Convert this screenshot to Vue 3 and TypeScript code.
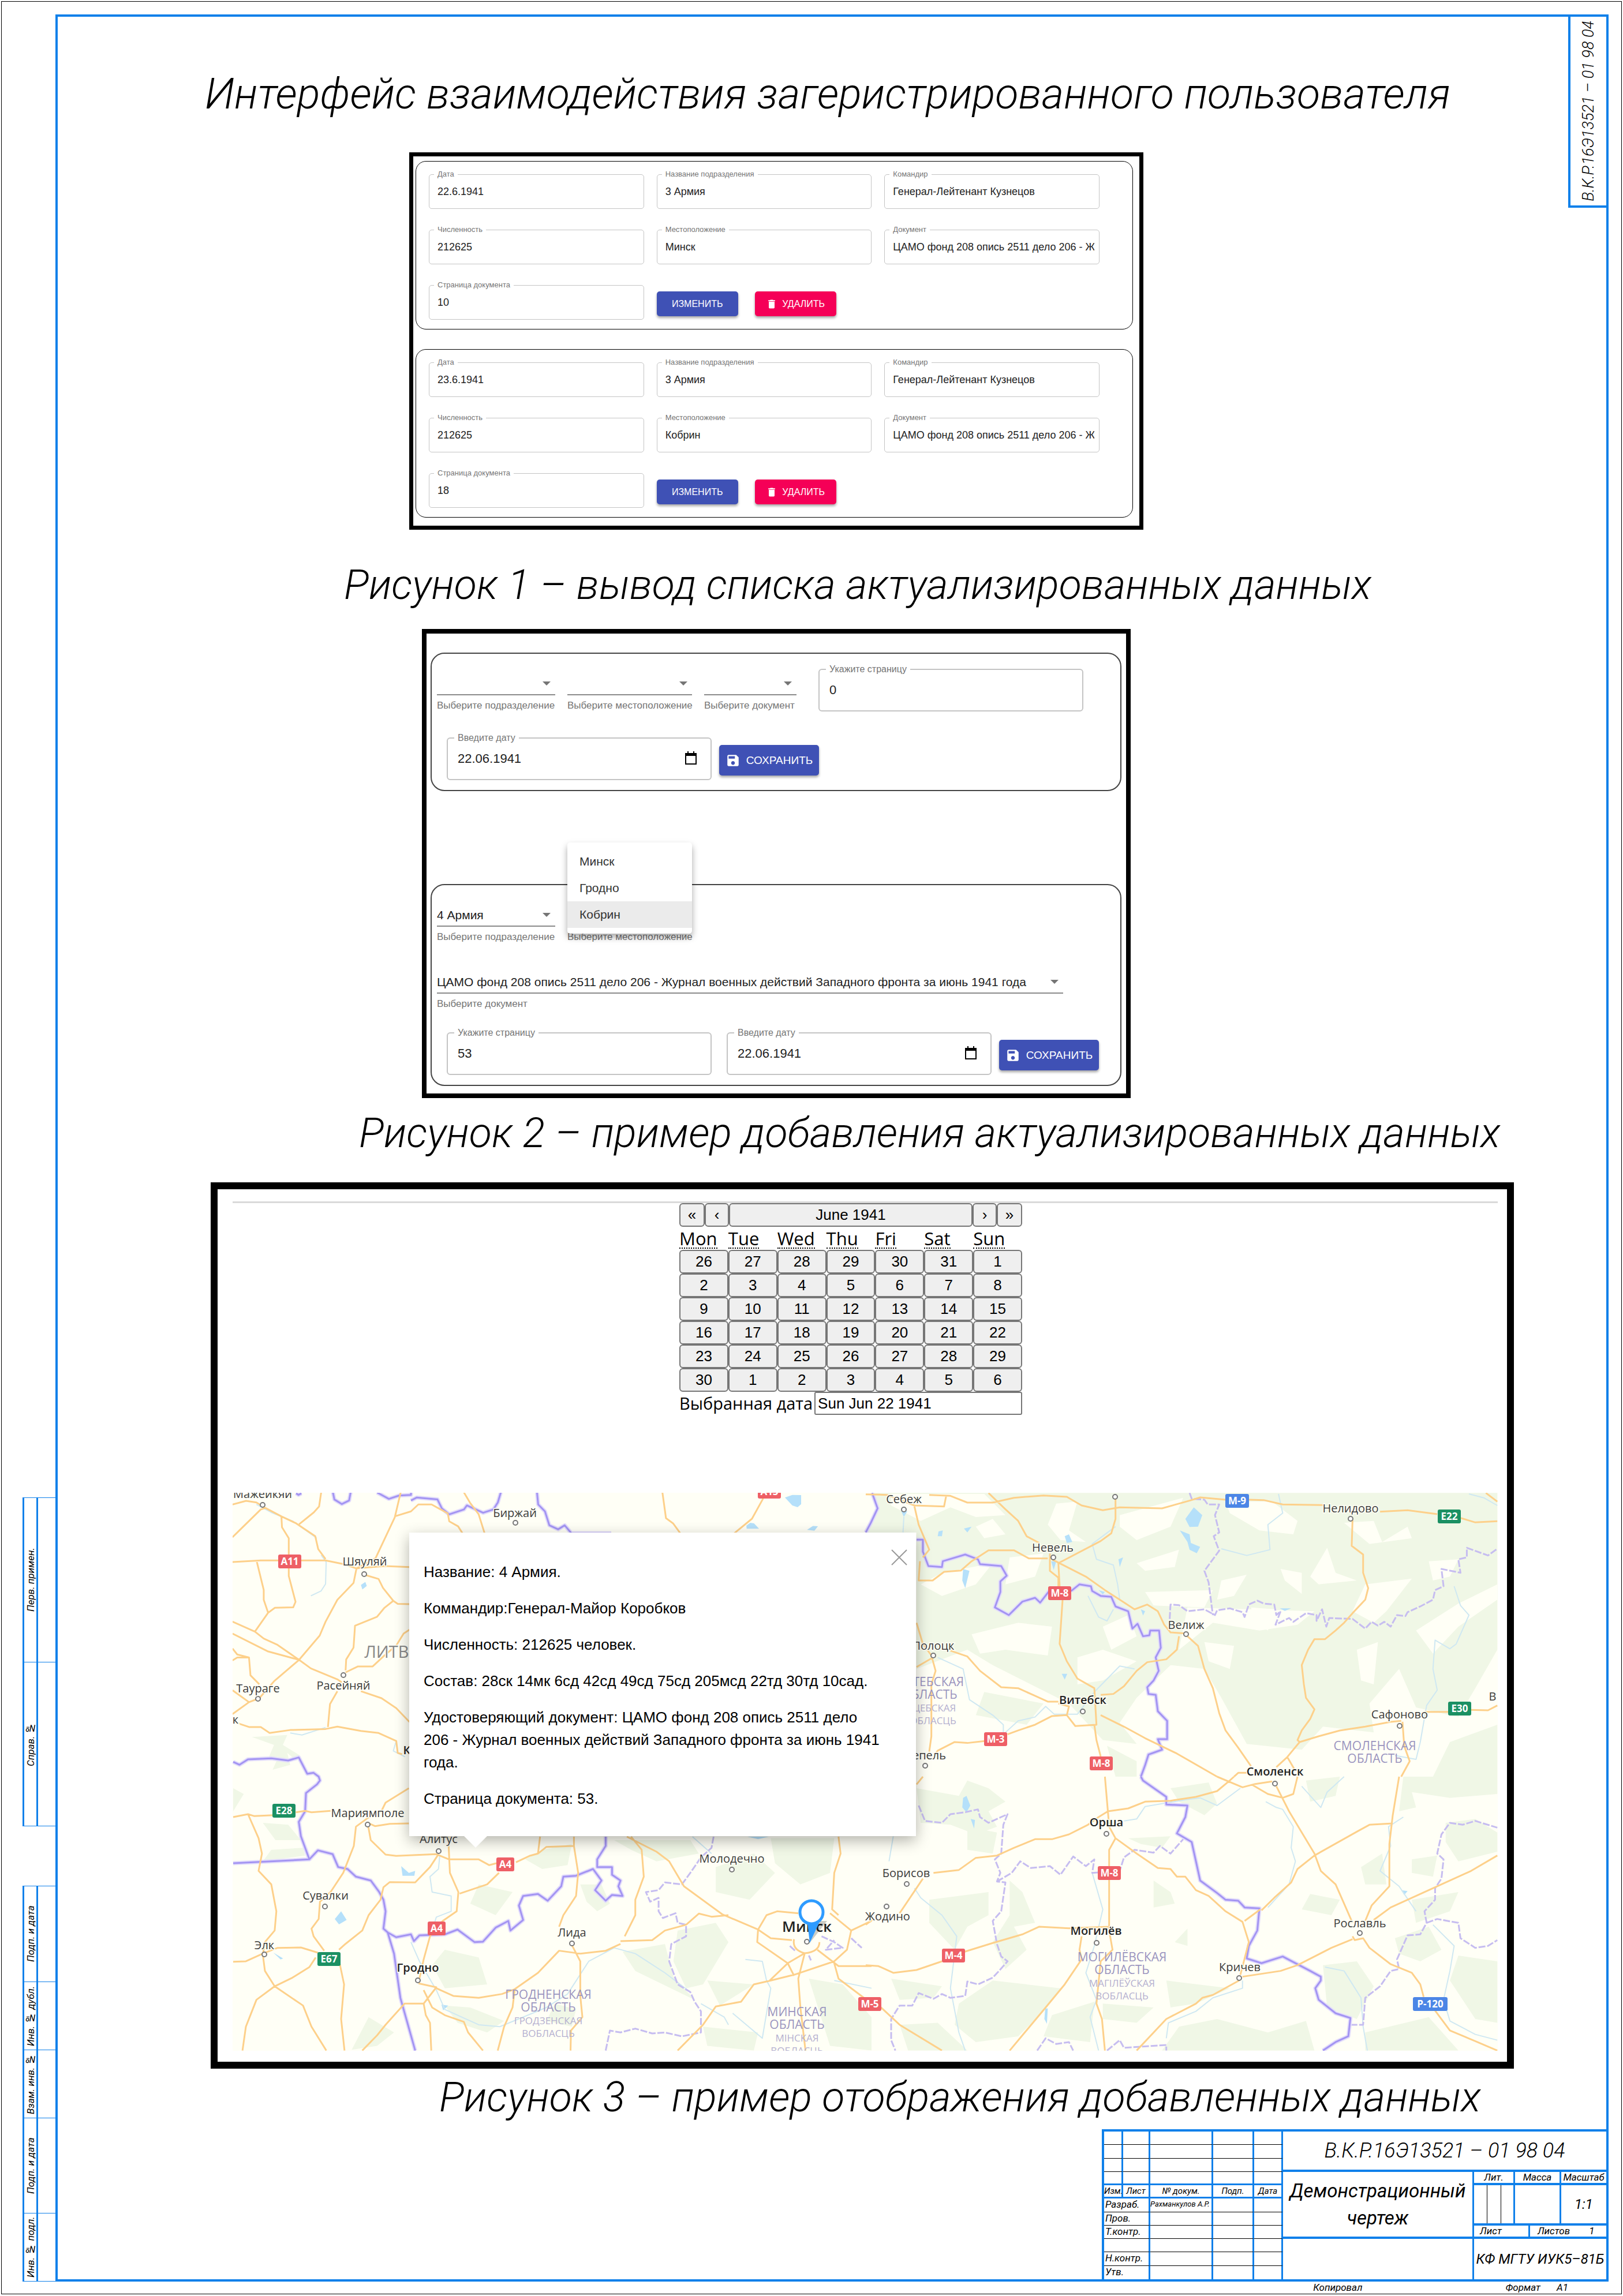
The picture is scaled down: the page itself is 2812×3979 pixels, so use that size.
<script setup lang="ts">
import { ref } from 'vue'

interface UnitRecord {
  id: number
  date: string
  unit: string
  commander: string
  strength: string
  place: string
  doc: string
  page: string
}

const docName = 'ЦАМО фонд 208 опись 2511 дело 206 - Журнал военных действий Западного фронта за июнь 1941 года'

const records = ref<UnitRecord[]>([
  { id: 1, date: '22.6.1941', unit: '3 Армия', commander: 'Генерал-Лейтенант Кузнецов', strength: '212625', place: 'Минск', doc: docName, page: '10' },
  { id: 2, date: '23.6.1941', unit: '3 Армия', commander: 'Генерал-Лейтенант Кузнецов', strength: '212625', place: 'Кобрин', doc: docName, page: '18' },
])

const recordFields: { key: Exclude<keyof UnitRecord, 'id'>; label: string }[] = [
  { key: 'date', label: 'Дата' },
  { key: 'unit', label: 'Название подразделения' },
  { key: 'commander', label: 'Командир' },
  { key: 'strength', label: 'Численность' },
  { key: 'place', label: 'Местоположение' },
  { key: 'doc', label: 'Документ' },
  { key: 'page', label: 'Страница документа' },
]

const newPage = ref('0')
const newDate = ref('22.06.1941')
const editPage = ref('53')
const editDate = ref('22.06.1941')
const places = ['Минск', 'Гродно', 'Кобрин']
const activePlace = ref('Кобрин')
const pickedDate = ref('Sun Jun 22 1941')

const weekdays = ['Mon', 'Tue', 'Wed', 'Thu', 'Fri', 'Sat', 'Sun']
const days: number[] = [
  ...[26, 27, 28, 29, 30, 31],
  ...Array.from({ length: 30 }, (_, i) => i + 1),
  ...[1, 2, 3, 4, 5, 6],
]

// Each map tile is traced on its own grid and placed by its transform.
interface Tile {
  transform: string
  forest?: string
  clearing?: string
  water?: string
  river?: string
  road: string
  border: string
  region?: string
}

const tiles: Tile[] = [
  {
    transform: 'translate(-43 -28) scale(.5102 .3444)',
    forest: 'M150 1310L270 1300L255 1350L310 1400L300 1430L270 1390L280 1450L220 1475L240 1410L205 1420L225 1350Z',
    water: 'M520 545L535 530L540 550L525 568ZM1960 105L1985 92L2015 93L2015 139L2003 154L1985 145ZM1829 247L1842 232L1855 235L1872 262L1830 262ZM2035 268L2055 248L2072 250L2060 272Z',
    river: 'M385 395L402 430L400 540L385 575L350 600M165 140L215 180L290 225L370 310M640 1330L630 1380L670 1410M280 1290L320 1300L400 1262',
    road: 'M84 305L118 255L180 165L196 158M84 140L130 122L165 130L196 158L250 200L300 235L365 300L375 365L400 415M250 200L252 255L275 310L275 500L298 630L290 658L228 660L205 685L190 620L190 570L166 425M84 430L180 422L400 422L460 440L505 462L600 450L685 455M385 80L378 150L360 180L310 240M655 80L635 205L570 410L505 462M635 200L690 175L715 140L760 140L815 185L820 225L850 250L865 285M870 80L890 130L920 190L940 285M505 462L495 535L440 620L400 730L380 800L310 922L225 1030L175 1115L140 1135L84 1195M535 495L580 515L595 560L630 625L645 640L685 642M630 625L600 660L575 705L500 750L495 860L470 920L468 975M84 730L160 780L205 685M160 780L190 815L235 845L310 922L350 965L440 1020L455 1035M84 790L205 880L310 922M84 865L100 895L140 910L145 1000L175 1045M84 925L100 910L140 910M468 985L510 955L560 955L600 900L640 850L665 790L685 770M440 1080L415 1145L408 1260M520 1080L590 1115L640 1165L685 1235M84 1075L140 1135M100 1240L140 1260L180 1260L210 1290L280 1275L400 1270L440 1258L520 1280L580 1290L640 1330L645 1390L660 1397M1544 81L1556 209L1580 235L1607 290M1886 110L1848 212L1788 285',
    border: 'M300 84L308 92L318 84M425 80L430 115L455 138L480 120L485 80M575 80L615 112L650 95L690 92L690 80M690 120L710 105L780 115L795 160L820 190L870 165L880 145L935 182L970 165L985 130L995 80M1118 80L1122 140L1145 175L1160 245L1190 265L1212 245L1235 285L1370 285',
  },
  {
    transform: 'translate(-43 492) scale(.7334 .3333)',
    forest: 'M60 60L85 90L60 180ZM150 380L225 370L230 410L130 440ZM130 240L190 250L220 330L160 330ZM790 380L860 350L850 460L790 480L750 430ZM960 330L1140 330L1160 400L1060 440L1000 380ZM880 560L930 560L950 660L920 700L895 650ZM1200 470L1290 400L1340 500L1280 640L1200 600ZM1330 320L1480 320L1470 500L1400 560L1340 450ZM640 560L720 600L680 720L620 660ZM1110 800L1200 760L1230 860L1170 1080L1130 1100L1100 960ZM980 910L1080 870L1100 1040L1150 1160L1010 1010ZM560 900L640 940L660 1080L560 1100L530 980ZM1180 1060L1290 1080L1210 1190ZM440 1330L380 1250L340 1420L400 1400ZM1170 1300L1300 1330L1290 1424L1180 1400ZM1420 1050L1500 1080L1568 1250L1568 1424L1470 1400ZM820 1180L870 1210L860 1300L800 1270ZM560 1190L620 1200L700 1270L660 1330L590 1280Z',
    water: 'M457 465L475 500L490 490L488 515L460 515ZM300 740L315 700L328 745L310 768ZM1275 312L1325 312L1300 325ZM155 915L178 945L172 950ZM552 1185L568 1190L556 1215Z',
    river: 'M548 410L545 480L525 520L530 600L575 620L575 700L540 730L530 800M480 860L500 960L540 1110L560 1210L640 1290L690 1300L800 1200L850 1130L900 960L960 890L1010 920L1080 1020L1140 1120M1165 1180L1220 1250L1230 1290M1270 950L1310 960L1320 1060L1330 1100L1310 1360L1240 1230M1145 312L1190 400M1480 1060L1568 1100',
    road: 'M60 210L95 195L110 205L155 200M95 195L120 320L128 400L120 490L150 560L162 700L158 800L135 860L130 925L135 1010L158 1090L225 1190L245 1300L280 1424M208 185L230 178L245 185L290 178M475 60L420 135L410 180L378 215L350 260L345 360L320 500L290 600L265 650L262 740L245 790L250 830L275 905M378 240L395 257L430 245L475 243M378 245L385 330L420 405L445 412L540 403L570 430L640 430L665 460L682 450M728 445L760 412L780 400L785 312M545 403L525 470L490 550L430 548L415 575L408 640L380 720L365 800L325 870L310 900M568 312L572 500L592 600L588 700L555 750L525 830L510 950L498 1070M595 608L660 560L688 500M780 400L800 365L865 360L865 312M865 360L875 500L870 620L840 720L830 780M60 962L90 960L130 920L165 890L220 888L260 915M82 1424L90 1300L115 1160L158 1090L200 1045L240 990L255 940M312 975L322 1080L315 1260L323 1424M498 1075L540 1095L510 1180L465 1180L420 1290L400 1345L365 1424M540 1100L580 1140L640 1150L695 1130M510 1110L530 1200L560 1240L605 1275L615 1330L650 1424M510 1180L515 1240L525 1280L528 1424M695 1130L725 1105L780 1020L830 905L880 920L940 905L975 870M860 875L880 960L880 1140L885 1250L858 1320L857 1424M725 1110L720 1200L700 1300L685 1424M975 855L1050 850L1080 800L1130 770L1160 712L1190 728L1230 720M990 312L1060 390L1090 440L1125 570L1215 715L1300 795L1330 840L1380 850M1000 312L1025 380L1030 520L1010 640L1010 720L985 830M1300 795L1320 720L1345 700L1395 710M1300 795L1298 860L1370 970L1385 1035M1490 312L1495 400L1480 500L1475 690L1490 720M1470 710L1520 800L1510 900L1480 960L1385 1030L1330 1060L1290 1080L1260 1170L1200 1195L1170 1290L1110 1424M1520 800L1568 750M1410 920L1395 1050L1400 1200L1412 1424M1440 900L1490 985L1568 985M1480 970L1490 1050L1550 1150M1385 845Q1380 900 1410 918Q1445 910 1445 860M1410 918L1370 970L1325 1065',
    border: 'M60 -77L75 -62L95 -90L150 -95L190 -84L215 -100L235 -15L250 -20L262 0L265 20L258 40L232 85L230 180L215 235L220 310L240 430L60 450M240 430L260 383L295 403L308 470L330 480L350 520L385 540L405 600L415 640L420 700L415 790L425 810L440 920L455 1150L490 1424M425 810L445 835L480 820L487 855L500 825L560 820L590 795L630 860L650 858L680 785L710 750L715 800L745 745L735 670L745 620L780 610L803 645L835 570L840 520L870 515L910 480L930 540L915 590L940 645L955 615L980 620L970 570L975 540L955 510L955 470L920 470L920 430L940 360L940 312',
    region: 'M1195 312L1190 370L1165 420L1140 500L1120 560L1080 550L1065 590L1035 600L1045 650L1065 630L1065 700L1075 735L1105 710L1110 760L1130 770L1130 830L1095 870L1090 960L1110 1080L1140 1120L1150 1170L1165 1220L1165 1330L1120 1350L1080 1330L1050 1335L1010 1310L975 1330L950 1320L940 1424M1450 830L1480 860L1500 890L1460 900L1480 850M1375 880L1390 910M1420 930L1425 955M1520 840L1545 890',
  },
  {
    transform: 'translate(1097 -28) scale(.7334 .3333)',
    forest: 'M15 85L1492 85L1492 900L1440 1100L1400 1250L1300 1200L1260 1000L1190 1180L1200 1330L1080 1300L1030 1420L900 1390L840 1150L800 1000L720 980L640 1150L600 1280L640 1390L560 1370L480 1180L300 980L240 900L120 1000L120 290L0 290L12 240L28 165ZM280 1120L420 1180L380 1290L260 1240ZM1380 1380L1492 1290L1492 1560L1340 1560ZM570 1400L640 1480L640 1560L590 1560Z',
    clearing: 'M60 90L280 90L330 200L260 210L200 160L130 230L60 150ZM450 140L500 130L480 280L520 340L460 330L430 250ZM600 200L750 110L720 260L640 330L600 260ZM850 130L960 130L1020 230L1010 300L930 280L860 190ZM260 260L300 220L330 300L280 320ZM1130 240L1200 230L1220 340L1280 260L1290 320L1190 350ZM130 560L180 500L300 450L260 560L180 620ZM340 420L420 400L400 520L330 560ZM640 450L740 380L730 470L660 490ZM980 480L1030 500L1030 610L990 540ZM1050 520L1090 370L1110 500L1160 540L1070 560ZM840 540L900 510L870 620L830 640ZM660 600L820 590L800 680L680 670ZM1180 560L1290 530L1230 700L1200 760L1150 700ZM250 820L360 760L440 780L430 930L330 900L270 920ZM560 780L620 720L640 830L580 900ZM760 680L1060 700L1020 770L930 800L820 760L740 900ZM1300 800L1400 660L1492 560L1492 640L1400 780L1340 920ZM1160 900L1210 860L1200 1080L1170 1060ZM910 680L970 690L950 800L920 760ZM500 940L560 900L640 960L560 1060L500 1080ZM1330 440L1400 430L1380 520L1340 540ZM800 860L870 880L860 1000L810 960Z',
    water: 'M755 220L775 160L795 200L785 260L765 262ZM742 280L765 300L768 345L790 365L782 398L765 380L760 340ZM470 310L480 300L488 340L475 345ZM232 270L250 260L240 290ZM172 285L182 280L180 310L170 310ZM230 480L245 490L235 580L228 540ZM597 430L608 420L600 470ZM438 440L450 440L444 485ZM84 180L98 180L90 210ZM978 685L1005 685L990 698ZM650 690L660 700L655 722ZM463 1025L476 1025L470 1055ZM550 590L565 600L560 612Z',
    river: 'M90 210L88 290M590 260L535 350L545 430L585 460L595 560L600 640M975 90L985 190L950 250L955 380L900 410L840 375M525 620L550 730L570 750L585 690M170 940L230 1000L245 1160L300 1240L325 1290L325 1340M325 1340L360 1270L400 1250L425 1195L445 1235L500 1235L540 1120L600 985L635 1000M1390 570L1405 670L1425 720L1395 870L1380 895L1345 850L1340 1000L1350 1110L1325 1190L1310 1380L1300 1470L1250 1450M1425 90L1460 110L1492 150',
    road: 'M150 95L200 100L240 135L300 135L350 110L420 98L475 105L510 150L560 175L600 160L700 165L765 125L790 108L850 120M0 92L50 95L115 150L185 155L190 100M905 120L940 122L985 145L1080 148M1215 182L1280 175L1350 195M1405 215L1440 238L1492 232M290 85L330 170L360 230L380 310L410 345M590 100L590 220L580 295L555 335L455 450M115 155L125 250L150 380L135 420M128 440L125 540L158 540L185 495L225 488L250 440L290 383L350 383L385 425L430 425M435 400L435 490L455 525L455 570M440 430L520 520L565 590L600 640L635 690L665 665L690 700L705 770L720 810L755 815M455 450L458 570M465 641L458 870L475 960L500 1050L540 1100L545 1290L495 1297L475 1240L480 1195L455 1180M760 830L785 880L800 1000L820 1100L835 1230L850 1320L880 1410L910 1505M740 830L735 900L710 950L665 965L640 1010L610 1090L585 1130L555 1135M120 760L135 870L155 930L165 1010L155 1080L155 1350L150 1430M120 990L155 945M200 905L240 935L270 1010L320 1095L360 1100L400 1140L430 1170L455 1170M335 1340L360 1320L400 1290L440 1245L475 1240M281 1375L240 1385L210 1380L170 1425L165 1440M555 1240L610 1300L660 1360L735 1440L830 1560M540 1290L545 1370L555 1455M1150 225L1148 360L1175 405L1175 500L1187 580L1180 640L1150 710L1130 760L1110 800L1085 845L1060 845L1045 900L1030 980L1035 1080L1040 1150L1060 1210L1050 1260L1030 1320L1020 1370L1025 1380L995 1460L970 1510M1025 1380L1070 1350L1120 1320L1180 1300L1240 1275L1265 1270M1320 1223L1377 1223M1429 1213L1470 1215L1492 1190M1268 1275L1272 1400L1285 1480L1265 1560M995 1455L1015 1530M1465 85L1492 130M870 1560L880 1540L905 1540',
    border: 'M15 85L28 165L12 240L0 290M120 328L135 328L135 390L148 465L180 470L182 440L235 405L265 430L270 455L320 465L333 515L318 545L318 600L305 680L338 720L370 650L400 630L412 655L435 590M485 595L505 560L532 570L535 595L555 620L580 625L590 675L620 700L630 790L642 765L655 830L670 825L672 800L693 800L697 890L685 940L692 1010L680 1060L665 1095L668 1130L685 1135L690 1220L712 1270L712 1365L690 1365L700 1420L668 1445L660 1500L650 1560',
    region: 'M765 85L770 115L800 120L808 145L835 145L825 200L835 290L822 310L835 385L800 490L810 550L820 720M718 740L720 665L740 668L760 700L800 690L825 720L830 695L860 685L890 705L895 730L905 665L925 645L940 660L965 665L970 720L980 700L968 770L1000 735L1010 755L1040 710L1065 720L1065 750L1078 690L1088 780L1095 735L1150 740L1180 790L1195 755L1210 775L1225 755L1240 780L1255 720L1275 725L1280 705L1310 675L1340 640L1345 590L1365 570L1360 480L1405 500L1400 430L1420 420L1420 370L1470 410L1492 375',
  },
  {
    transform: 'translate(1097 492) scale(.7334 .3333)',
    forest: 'M120 60L220 100L240 20L290 60L330 130L290 180L310 260L260 300L200 250L130 240ZM240 260L310 290L300 400L240 380ZM340 540L370 600L400 760L350 780L380 900L330 1000L300 860L340 720ZM150 640L290 600L290 720L240 780L210 900L150 760ZM680 540L720 600L730 660L680 680ZM620 320L720 310L700 370L650 350ZM720 60L810 30L830 140L800 200L740 130ZM1040 20L1120 0L1110 100L1050 130ZM1270 0L1492 0L1492 90L1380 110L1290 80L1300 160L1260 180ZM1370 240L1440 220L1492 290L1492 390L1400 440L1370 340ZM1050 610L1120 640L1100 720L1030 690ZM1170 470L1220 400L1230 560L1180 560ZM1290 430L1350 410L1340 520L1290 500ZM1290 640L1400 600L1380 700L1300 760ZM1250 840L1330 780L1360 900L1310 960L1260 920ZM1400 930L1492 960L1492 1280L1440 1260L1380 1060ZM710 1060L860 1100L780 1180L720 1200ZM740 1300L830 1260L950 1330L1040 1270L1060 1424L700 1424ZM1080 980L1160 960L1200 1090L1160 1260L1090 1200ZM60 1050L180 1090L160 1150L80 1160ZM220 1180L300 1060L460 1100L420 1220L360 1350L260 1380L210 1290ZM440 1240L540 1170L530 1380L420 1350ZM80 1290L170 1280L240 1424L100 1424ZM560 1180L680 1200L640 1280L560 1260ZM1180 1330L1330 1250L1400 1424L1180 1424ZM730 860L760 790L760 880Z',
    water: 'M230 110L238 100L247 150L238 185L228 160ZM248 220L258 225L256 270ZM1265 590L1280 595L1272 615ZM424 1205L430 1205L428 1285L422 1260Z',
    river: 'M65 310L55 440M115 580L130 630L180 720L215 830L200 1100L220 1330L235 1424M885 60L830 150L790 110L755 120L660 155L640 220L610 230M945 130L970 160L985 170L1010 260L1005 370L1015 440L1000 560L950 680M1030 50L1075 160L1090 80L1130 0M1270 210L1235 260L1240 360L1215 490L1260 570L1300 700M1340 770L1390 880L1380 1010L1365 1160L1380 1270L1440 1340L1492 1370M535 500L560 690L540 880L520 1020L545 1160L530 1250L550 1424M890 1060L890 1100L820 1150L780 1220L715 1280L710 1360M1085 990L1130 1010L1170 1150L1175 1300L1185 1424',
    road: 'M565 0L572 180L550 210L525 250L480 300L440 325L400 325L350 370L310 410L260 422L220 485L160 500M572 180L620 165L660 130L720 125L780 105L830 75L860 20L870 0M830 0L890 55L920 38L960 25M915 45L950 90L985 110L1010 90L1020 0M970 50L1000 180L1060 400L1075 490L1110 560L1150 760M572 180L575 260L590 320L640 400L690 475L720 480L735 520L755 520L780 590L810 620L850 700L890 755L905 860L885 1030M590 320L575 380L575 800L583 900L555 960L545 1180L558 1260L565 1424M932 690L895 750M935 695L965 630L1005 550L1020 480L1060 410L1165 280L1190 250L1245 243M1260 0L1245 200L1237 350L1237 570L1195 670L1180 750M1492 410L1430 490L1330 590L1240 680L1200 745M1150 830L1155 850L1175 840L1190 890L1240 975L1290 1020L1310 1080L1318 1145M1345 1216L1380 1320L1440 1375L1492 1424M1150 845L1100 890L1020 980L980 1010L890 1040M882 1060L820 1135L795 1150L780 1180L710 1260L640 1424M0 770L15 745M135 530L80 710M0 980L30 985L65 1020L120 1005L180 960M234 910L300 865L370 820L410 780L480 788L575 780M510 830L505 900L510 950L470 1080L425 1200L340 1424M36 1200L80 1290L180 1424M120 40L135 0',
    border: 'M650 0L655 20L710 105L710 145L760 150L755 210L735 295L770 340L780 440L790 540L830 605L850 640L880 645L895 680L930 685L925 800L905 880L900 945L935 970L985 935L1050 1010L1075 1040L1075 1060L1062 1100L1070 1160L1110 1230L1145 1255L1140 1350L1110 1380L1080 1424',
    region: 'M125 150L140 230L180 240L200 195L235 185L265 170L270 210L290 240L335 195L325 250L320 400L305 430L318 500L310 545L330 550L320 700L300 750L310 870L320 935L335 960L315 1010L300 1045L265 1080L240 1065L235 1140L200 1150L180 1130L160 1155L125 1125L110 1190L80 1190L60 1260L60 1370L70 1424M310 545L345 500L365 440L390 475L435 465L460 510L490 415L520 465L540 430L535 500L600 490L610 420L635 380L680 395L695 360L720 400L750 325M405 1424L425 1360L450 1390L480 1380L490 1424M570 1424L600 1370L610 1410L710 1395L710 1424M1145 1290L1175 1290L1180 1150L1215 1090L1240 1010L1260 1000L1255 950L1280 825L1310 820L1325 760L1320 700L1345 640L1345 580L1360 530L1365 430L1350 400L1360 300L1380 240L1410 250L1440 230L1492 265M1325 760L1350 740L1400 760L1405 840L1440 890L1470 880L1492 850',
  },
]

interface Town { name: string; x: number; y: number; dot?: [number, number]; kind?: string }
const towns: Town[] = [
  { name: 'Мажейкяй', x: 52, y: 9, dot: [52, 21] },
  { name: 'Биржай', x: 489, y: 42, dot: [490, 52] },
  { name: 'Шяуляй', x: 229, y: 126, dot: [228, 141] },
  { name: 'Таураге', x: 44, y: 346, dot: [44, 357] },
  { name: 'Расейняй', x: 192, y: 341, dot: [192, 316] },
  { name: 'к', x: 5, y: 400 },
  { name: 'Мариямполе', x: 234, y: 562, dot: [234, 575] },
  { name: 'Алитус', x: 357, y: 607, dot: [357, 621] },
  { name: 'Молодечно', x: 865, y: 641, dot: [865, 653] },
  { name: 'Сувалки', x: 161, y: 705, dot: [160, 717] },
  { name: 'Лида', x: 588, y: 769, dot: [588, 781] },
  { name: 'Элк', x: 55, y: 791, dot: [55, 800] },
  { name: 'Гродно', x: 321, y: 830, dot: [321, 845], kind: 'major' },
  { name: 'Минск', x: 995, y: 761, dot: [995, 778], kind: 'capital' },
  { name: 'Жодино', x: 1135, y: 741, dot: [1133, 717] },
  { name: 'Борисов', x: 1167, y: 666, dot: [1168, 678] },
  { name: 'Себеж', x: 1163, y: 18, dot: [1163, 29] },
  { name: 'Нелидово', x: 1937, y: 34, dot: [1937, 45] },
  { name: 'Невель', x: 1421, y: 102, dot: [1422, 112] },
  { name: 'Велиж', x: 1652, y: 236, dot: [1652, 245] },
  { name: 'Полоцк', x: 1214, y: 272, dot: [1214, 282] },
  { name: 'Витебск', x: 1473, y: 366, dot: [1473, 379], kind: 'major' },
  { name: 'Сафоново', x: 2022, y: 391, dot: [2022, 404] },
  { name: 'В', x: 2183, y: 360 },
  { name: 'Лепель', x: 1200, y: 462, dot: [1200, 473] },
  { name: 'Смоленск', x: 1806, y: 490, dot: [1806, 504], kind: 'major' },
  { name: 'Орша', x: 1514, y: 578, dot: [1514, 591], kind: 'major' },
  { name: 'Могилёв', x: 1496, y: 766, dot: [1497, 780], kind: 'major' },
  { name: 'Рославль', x: 1953, y: 753, dot: [1953, 763] },
  { name: 'Кричев', x: 1745, y: 829, dot: [1744, 841] },
  { name: 'К', x: 302, y: 453, kind: 'major' },
  { name: 'ЛИТВ', x: 267, y: 286, kind: 'country' },
]

const regions: { x: number; y: number; lines: string[] }[] = [
  { x: 547, y: 877, lines: ['ГРОДНЕНСКАЯ', 'ОБЛАСТЬ', 'ГРОДЗЕНСКАЯ', 'ВОБЛАСЦЬ'] },
  { x: 978, y: 907, lines: ['МИНСКАЯ', 'ОБЛАСТЬ', 'МІНСКАЯ', 'ВОБЛАСЦЬ'] },
  { x: 1208, y: 335, lines: ['ВИТЕБСКАЯ', 'ОБЛАСТЬ', 'ВІЦЕБСКАЯ', 'ВОБЛАСЦЬ'] },
  { x: 1979, y: 446, lines: ['СМОЛЕНСКАЯ', 'ОБЛАСТЬ'] },
  { x: 1541, y: 812, lines: ['МОГИЛЁВСКАЯ', 'ОБЛАСТЬ', 'МАГІЛЁЎСКАЯ', 'ВОБЛАСЦЬ'] },
]

const shields: { code: string; x: number; y: number; w: number; tone: string }[] = [
  { code: 'A11', x: 79, y: 107, w: 40, tone: 'red' },
  { code: 'A13', x: 910, y: -14, w: 40, tone: 'red' },
  { code: 'E28', x: 69, y: 539, w: 40, tone: 'green' },
  { code: 'A4', x: 457, y: 632, w: 31, tone: 'red' },
  { code: 'A4', x: 338, y: 743, w: 31, tone: 'red' },
  { code: 'E67', x: 147, y: 796, w: 40, tone: 'green' },
  { code: 'М-9', x: 1720, y: 2, w: 41, tone: 'blue' },
  { code: 'E22', x: 2088, y: 29, w: 40, tone: 'green' },
  { code: 'М-8', x: 1413, y: 162, w: 40, tone: 'red' },
  { code: 'E30', x: 2106, y: 362, w: 40, tone: 'green' },
  { code: 'М-3', x: 1302, y: 415, w: 40, tone: 'red' },
  { code: 'М-8', x: 1485, y: 457, w: 40, tone: 'red' },
  { code: 'М-8', x: 1499, y: 647, w: 40, tone: 'red' },
  { code: 'М-4', x: 1229, y: 790, w: 40, tone: 'red' },
  { code: 'М-5', x: 1084, y: 874, w: 40, tone: 'red' },
  { code: 'Р-120', x: 2045, y: 874, w: 60, tone: 'blue' },
]

const code = 'В.К.Р.16Э13521 – 01 98 04'
const blank = ['', '', '', '', '']
const approvals: string[][] = [
  ['Разраб.', 'Рахманкулов А.Р.'],
  ['Пров.', ''],
  ['Т.контр.', ''],
  ['', ''],
  ['Н.контр.', ''],
  ['Утв.', ''],
]
</script>

<template>
  <div class="sheet">
    <div class="sheet-main">
      <aside class="rail">
        <div class="rail-table">
          <div class="rail-row tall"><span>Перв. примен.</span></div>
          <div class="rail-row tall"><span>Справ. №</span></div>
        </div>
        <div class="rail-table">
          <div class="rail-row mid"><span>Подп. и дата</span></div>
          <div class="rail-row low"><span>Инв. № дубл.</span></div>
          <div class="rail-row low"><span>Взам. инв. №</span></div>
          <div class="rail-row mid"><span>Подп. и дата</span></div>
          <div class="rail-row low"><span>Инв. № подл.</span></div>
        </div>
      </aside>

      <main class="frame">
        <div class="content">
          <div class="figures">
            <h1 class="caption c0">Интерфейс взаимодействия загеристрированного пользователя</h1>

            <section class="figure list">
              <form v-for="r in records" :key="r.id" class="record" @submit.prevent>
                <label v-for="f in recordFields" :key="f.key" class="field small">
                  <span class="field-label">{{ f.label }}</span>
                  <input v-model="r[f.key]" type="text" />
                </label>
                <div class="actions">
                  <button type="button" class="btn primary">ИЗМЕНИТЬ</button>
                  <button type="button" class="btn danger">
                    <svg viewBox="0 0 24 24" width="20" height="20" aria-hidden="true"><path d="M6 19c0 1.100.9 2 2 2h8c1.100 0 2-.9 2-2V7H6v12zM19 4h-3.500l-1-1h-5l-1 1H5v2h14V4z" fill="currentColor" /></svg>
                    УДАЛИТЬ
                  </button>
                </div>
              </form>
            </section>

            <h2 class="caption c1">Рисунок 1 – вывод списка актуализированных данных</h2>

            <section class="figure add">
              <form class="card" @submit.prevent>
                <div class="row">
                  <label class="pick w-unit">
                    <span class="pick-box"><select><option></option></select><i class="arrow"></i></span>
                    <span class="helper">Выберите подразделение</span>
                  </label>
                  <label class="pick w-place">
                    <span class="pick-box"><select><option></option></select><i class="arrow"></i></span>
                    <span class="helper">Выберите местоположение</span>
                  </label>
                  <label class="pick w-doc">
                    <span class="pick-box"><select><option></option></select><i class="arrow"></i></span>
                    <span class="helper">Выберите документ</span>
                  </label>
                  <label class="field large first-page">
                    <span class="field-label">Укажите страницу</span>
                    <input v-model="newPage" type="text" />
                  </label>
                </div>
                <div class="row inset">
                  <label class="field large">
                    <span class="field-label">Введите дату</span>
                    <input v-model="newDate" type="text" />
                    <svg class="cal" viewBox="0 0 22 24" aria-hidden="true"><path d="M2 4h18v18H2zM2 5h18M6 0v4M16 0v4" fill="none" stroke="#000" stroke-width="2" /><path d="M2 3h18v5H2z" /></svg>
                  </label>
                  <button type="submit" class="btn primary save">
                    <svg viewBox="0 0 24 24" width="26" height="26" aria-hidden="true"><path d="M17 3H5c-1.110 0-2 .9-2 2v14c0 1.100.89 2 2 2h14c1.100 0 2-.9 2-2V7l-4-4zm-5 16c-1.660 0-3-1.340-3-3s1.340-3 3-3 3 1.340 3 3-1.340 3-3 3zm3-10H5V5h10v4z" fill="currentColor" /></svg>
                    СОХРАНИТЬ
                  </button>
                </div>
              </form>

              <form class="card second" @submit.prevent>
                <div class="row">
                  <label class="pick w-unit">
                    <span class="pick-box"><select><option>4 Армия</option></select><i class="arrow"></i></span>
                    <span class="helper">Выберите подразделение</span>
                  </label>
                  <div class="pick w-place">
                    <label>
                      <span class="pick-box"><select v-model="activePlace"><option v-for="p in places" :key="p">{{ p }}</option></select></span>
                      <span class="helper">Выберите местоположение</span>
                    </label>
                    <ul class="menu" role="listbox">
                      <li v-for="p in places" :key="p" role="option" :aria-selected="p === activePlace" :class="{ active: p === activePlace }" @click="activePlace = p">{{ p }}</li>
                    </ul>
                  </div>
                </div>
                <label class="pick w-long">
                  <span class="pick-box"><select><option>{{ docName }}</option></select><i class="arrow"></i></span>
                  <span class="helper">Выберите документ</span>
                </label>
                <div class="row inset wide">
                  <label class="field large">
                    <span class="field-label">Укажите страницу</span>
                    <input v-model="editPage" type="text" />
                  </label>
                  <label class="field large">
                    <span class="field-label">Введите дату</span>
                    <input v-model="editDate" type="text" />
                    <svg class="cal" viewBox="0 0 22 24" aria-hidden="true"><path d="M2 4h18v18H2zM2 5h18M6 0v4M16 0v4" fill="none" stroke="#000" stroke-width="2" /><path d="M2 3h18v5H2z" /></svg>
                  </label>
                  <button type="submit" class="btn primary save">
                    <svg viewBox="0 0 24 24" width="26" height="26" aria-hidden="true"><path d="M17 3H5c-1.110 0-2 .9-2 2v14c0 1.100.89 2 2 2h14c1.100 0 2-.9 2-2V7l-4-4zm-5 16c-1.660 0-3-1.340-3-3s1.340-3 3-3 3 1.340 3 3-1.340 3-3 3zm3-10H5V5h10v4z" fill="currentColor" /></svg>
                    СОХРАНИТЬ
                  </button>
                </div>
              </form>
            </section>

            <h2 class="caption c2">Рисунок 2 – пример добавления актуализированных данных</h2>

            <section class="figure show">
              <hr class="rule" />
              <div class="calendar">
                <div class="cal-nav">
                  <button type="button">«</button>
                  <button type="button">‹</button>
                  <button type="button" class="month">June 1941</button>
                  <button type="button">›</button>
                  <button type="button">»</button>
                </div>
                <div class="cal-grid">
                  <div v-for="w in weekdays" :key="w" class="weekday"><abbr>{{ w }}</abbr></div>
                  <button v-for="(d, i) in days" :key="i" type="button">{{ d }}</button>
                </div>
                <label class="picked">Выбранная дата<input v-model="pickedDate" type="text" /></label>
              </div>

              <div class="map">
                <svg class="map-art" viewBox="0 0 2192 967">
                  <rect width="2192" height="967" fill="#fffff6" />
                  <g v-for="t in tiles" :key="'f' + t.transform" :transform="t.transform">
                    <path v-if="t.forest" :d="t.forest" class="forest" />
                    <path v-if="t.clearing" :d="t.clearing" class="clearing" />
                    <path v-if="t.water" :d="t.water" class="water" />
                    <path v-if="t.river" :d="t.river" class="river" />
                  </g>
                  <g v-for="t in tiles" :key="'r' + t.transform" :transform="t.transform">
                    <path v-if="t.region" :d="t.region" class="region" />
                    <path :d="t.border" class="border-glow" />
                    <path :d="t.border" class="border" />
                    <path :d="t.road" class="road" />
                  </g>
                  <g v-for="t in towns" :key="t.name" class="town" :class="t.kind">
                    <circle v-if="t.dot" :cx="t.dot[0]" :cy="t.dot[1]" r="4" />
                    <text :x="t.x" :y="t.y">{{ t.name }}</text>
                  </g>
                  <circle class="lone" cx="1529" cy="7" r="4" />
                  <g v-for="r in regions" :key="r.lines[0]" class="oblast">
                    <text v-for="(l, i) in r.lines" :key="i" :x="r.x" :y="r.y + i * 22" :class="{ minor: i > 1 }">{{ l }}</text>
                  </g>
                  <g v-for="(s, i) in shields" :key="i" :class="['shield', s.tone]">
                    <rect :x="s.x" :y="s.y" :width="s.w" height="24" rx="3" />
                    <text :x="s.x + s.w / 2" :y="s.y + 18">{{ s.code }}</text>
                  </g>
                  <g>
                    <path d="M1000 780L1030 742L1018 742Z" fill="#000" opacity=".2" />
                    <path d="M996 746L1000 780L1016 746Z" fill="#2e9bff" />
                    <circle cx="1003" cy="727" r="20" fill="#fff" stroke="#2e9bff" stroke-width="5" />
                  </g>
                </svg>
                <article class="balloon">
                  <button type="button" class="close" aria-label="Закрыть">
                    <svg viewBox="0 0 28 28" width="28" height="28"><path d="M1 1L27 27M27 1L1 27" stroke="#999" stroke-width="2" /></svg>
                  </button>
                  <p>Название: 4 Армия.</p>
                  <p>Коммандир:Генерал-Майор Коробков</p>
                  <p>Численность: 212625 человек.</p>
                  <p>Состав: 28ск 14мк 6сд 42сд 49сд 75сд 205мсд 22тд 30тд 10сад.</p>
                  <p>Удостоверяющий документ: {{ docName }}.</p>
                  <p>Страница документа: 53.</p>
                </article>
              </div>
            </section>

            <h2 class="caption c3">Рисунок 3 – пример отображения добавленных данных</h2>
          </div>

          <div class="stamp"><span>{{ code }}</span></div>
        </div>

        <section class="title-block">
          <table class="changes">
            <tbody>
              <tr v-for="n in 4" :key="n" :class="{ strong: n === 4 }"><td v-for="(b, i) in blank" :key="i">{{ b }}</td></tr>
              <tr class="strong heads"><th>Изм.</th><th>Лист</th><th>№ докум.</th><th>Подп.</th><th>Дата</th></tr>
              <tr v-for="(a, i) in approvals" :key="'a' + i" :class="{ last: i === 5 }">
                <td class="role">{{ a[0] }}</td><td class="person">{{ a[1] }}</td><td></td><td></td>
              </tr>
            </tbody>
          </table>
          <div class="about">
            <div class="code">{{ code }}</div>
            <div class="name">Демонстрационный<br />чертеж</div>
            <div class="head lit">Лит.</div>
            <div class="head mass">Масса</div>
            <div class="head scale">Масштаб</div>
            <div class="lit-cells"><i></i><i></i><i></i></div>
            <div class="mass-cell"></div>
            <div class="scale-cell">1:1</div>
            <div class="pages"><span>Лист</span><span>Листов</span><span>1</span></div>
            <div class="empty"></div>
            <div class="org">КФ МГТУ ИУК5–81Б</div>
          </div>
        </section>
      </main>
    </div>
    <footer class="foot"><span class="copied">Копировал</span><span>Формат</span><span>А1</span></footer>
  </div>
</template>

<style>
body {
  background: #fff;
}
</style>

<style scoped>
* {
  box-sizing: border-box;
}
.sheet {
  --blue: #0f80ea;
  margin: 2px;
  border: 1px solid #000;
  padding: 22px 22px 0 36px;
  font-family: "Liberation Sans", Arial, sans-serif;
  color: #000;
}
.sheet-main {
  display: flex;
}
.rail {
  width: 57px;
  display: flex;
  flex-direction: column;
  justify-content: flex-end;
  gap: 103px;
}
.rail-table {
  border: solid var(--blue);
  border-width: 1px 0 1px 3px;
}
.rail-row {
  display: flex;
  width: 54px;
  font: italic 17px/22px Roboto, sans-serif;
}
.rail-row + .rail-row {
  border-top: 1px solid var(--blue);
}
.rail-row span {
  width: 24px;
  border-left: 3px solid var(--blue);
  writing-mode: vertical-rl;
  transform: rotate(180deg);
  text-align: center;
  white-space: nowrap;
}
.tall { height: 284px; }
.mid { height: 165px; }
.low { height: 118px; }

.frame {
  flex: 1;
  min-width: 0;
  border: 4px solid var(--blue);
}
.content {
  display: grid;
  grid-template-columns: 1fr 66px;
}
.figures {
  min-width: 0;
  padding-top: 94px;
}
.stamp {
  display: flex;
  align-items: center;
  justify-content: center;
  height: 331px;
  border: solid var(--blue);
  border-width: 0 0 4px 4px;
}
.stamp span {
  writing-mode: vertical-rl;
  transform: rotate(180deg);
  font: italic 300 27px/40px Roboto, sans-serif;
  white-space: nowrap;
}
.caption {
  margin: 0;
  font: italic 300 72px/80px Roboto, sans-serif;
  white-space: nowrap;
}
.c0 { padding-left: 255px; font-size: 74px; }
.c1 { padding-left: 496px; }
.c2 { padding-left: 522px; }
.c3 { padding-left: 661px; }

.figure {
  border: solid #000;
}
.list {
  max-width: 1272px;
  margin: 61px 0 56px 609px;
  border-width: 7px;
  padding: 8px 11px 14px 4px;
  display: grid;
  gap: 34px;
}
.record {
  border: 1px solid #000;
  border-radius: 18px;
  padding: 22px 57px 16px 22px;
  display: grid;
  grid-template-columns: repeat(3, 1fr);
  gap: 36px 22px;
}
.field {
  position: relative;
  display: block;
  border: 1px solid #c4c4c4;
  border-radius: 5px;
}
.field-label {
  position: absolute;
  left: 8px;
  padding: 0 6px;
  background: #fff;
  color: #757575;
  white-space: nowrap;
}
.field input {
  width: 100%;
  border: 0;
  outline: 0;
  background: none;
  color: #222;
  font-family: inherit;
}
.small {
  height: 60px;
  padding: 0 8px 0 14px;
}
.small .field-label {
  top: -9px;
  font-size: 13px;
  line-height: 16px;
}
.small input {
  height: 58px;
  padding: 0;
  font-size: 18px;
}
.actions {
  grid-column: span 2;
  display: flex;
  align-items: flex-start;
  gap: 29px;
  padding-top: 11px;
}
.btn {
  display: flex;
  align-items: center;
  justify-content: center;
  gap: 8px;
  width: 141px;
  height: 43px;
  padding: 0;
  border: 0;
  border-radius: 5px;
  color: #fff;
  font: 16px "Liberation Sans", sans-serif;
  box-shadow: 0 3px 4px rgba(0, 0, 0, 0.35);
}
.primary { background: #3f51b5; }
.danger { background: #f50057; }

.add {
  max-width: 1228px;
  margin: 36px 0 21px 631px;
  border-width: 8px;
  padding: 33px 8px 13px 7px;
}
.card {
  border: 2px solid #444;
  border-radius: 24px;
  padding: 26px 9px 17px;
}
.second {
  margin-top: 161px;
}
.row {
  display: flex;
  align-items: flex-start;
  gap: 21px;
}
.pick {
  position: relative;
  display: block;
  padding-top: 6px;
}
.w-unit { width: 205px; }
.w-place { width: 216px; }
.w-doc { width: 160px; }
.w-long { width: 1085px; margin-top: 42px; }
.pick-box {
  position: relative;
  display: block;
  border-bottom: 2px solid #8a8a8a;
}
.pick select {
  display: block;
  width: 100%;
  height: 38px;
  border: 0;
  padding: 0;
  background: none;
  appearance: none;
  color: #222;
  font: 21px "Liberation Sans", sans-serif;
}
.arrow {
  position: absolute;
  right: 8px;
  top: 16px;
  border: solid transparent;
  border-width: 7px 7px 0;
  border-top-color: #757575;
}
.helper {
  display: block;
  padding-top: 8px;
  color: #757575;
  font-size: 17px;
  line-height: 20px;
  white-space: nowrap;
}
.large {
  flex: 0 1 459px;
  height: 74px;
  border-width: 2px;
  border-radius: 6px;
  padding: 0 17px;
}
.large .field-label {
  top: -11px;
  left: 11px;
  font-size: 16px;
  line-height: 20px;
}
.large input {
  height: 70px;
  padding: 0;
  font-size: 22px;
}
.first-page { margin-left: 17px; }
.cal {
  position: absolute;
  right: 23px;
  top: 22px;
  width: 22px;
  height: 24px;
}
.inset {
  gap: 13px;
  padding-left: 17px;
  margin-top: 45px;
}
.wide { margin-top: 39px; }
.wide .field + .field { margin-left: 13px; }
.save {
  width: 173px;
  height: 53px;
  margin-top: 13px;
  gap: 10px;
  font-size: 19px;
}
.menu {
  position: absolute;
  top: -100px;
  left: 0;
  width: 216px;
  margin: 0;
  padding: 10px 0;
  background: #fff;
  border-radius: 5px;
  box-shadow: 0 6px 12px rgba(0, 0, 0, 0.35);
  list-style: none;
  font-size: 21px;
  line-height: 46px;
  color: #333;
}
.menu li { padding-left: 21px; }
.menu .active { background: #ebebeb; }

.show {
  max-width: 2258px;
  margin: 45px 0 10px 265px;
  border-width: 12px;
  padding: 21px 16px 19px 26px;
}
.rule {
  margin: 0;
  border: 0;
  height: 3px;
  background: #d9d9d9;
}
.calendar {
  width: 594px;
  margin-left: 774px;
}
.cal-nav {
  display: grid;
  grid-template-columns: 44px 42px 1fr 42px 44px;
}
.calendar button {
  height: 41px;
  padding: 0;
  border: 2px solid #767676;
  border-radius: 6px;
  background: #efefef;
  color: #000;
  font: 26px "Liberation Sans", sans-serif;
}
.cal-grid {
  display: grid;
  grid-template-columns: repeat(7, 1fr);
}
.weekday {
  height: 40px;
  font: 31px/40px "Open Sans", sans-serif;
}
.weekday abbr {
  display: inline-block;
  height: 38px;
  border-bottom: 2px dotted #000;
}
.picked {
  display: flex;
  align-items: center;
  gap: 3px;
  font: 29px/40px "Open Sans", sans-serif;
}
.picked input {
  flex: 1;
  min-width: 0;
  height: 40px;
  padding: 0 4px;
  border: 2px solid #767676;
  border-radius: 3px;
  font: 26px "Liberation Sans", sans-serif;
}
.map {
  position: relative;
  margin-top: 135px;
}
.map-art {
  display: block;
  width: 100%;
}
.forest { fill: #f0f7e6; }
.clearing { fill: #fffff6; }
.water { fill: #b5e0fa; }
.river, .road, .border, .border-glow, .region {
  fill: none;
  vector-effect: non-scaling-stroke;
  stroke-linejoin: round;
}
.river { stroke: #cfe8f2; stroke-width: 2px; }
.road { stroke: #fdd08a; stroke-width: 3px; }
.border { stroke: #a394f2; stroke-width: 3px; }
.border-glow { stroke: #e2dcfb; stroke-width: 7px; }
.region { stroke: #c6bdf0; stroke-width: 3px; stroke-dasharray: 12 3; }
.town text, .oblast text, .shield text {
  text-anchor: middle;
  font-family: "Open Sans", sans-serif;
}
.town text {
  font-size: 20px;
  font-weight: 500;
  fill: #3c3c3c;
  stroke: #fffff6;
  stroke-width: 3px;
  paint-order: stroke;
}
.town circle, .lone {
  fill: #fff;
  stroke: #777;
  stroke-width: 2px;
}
.town.major text { font-weight: 600; fill: #222; }
.town.capital text { font-size: 26px; font-weight: 600; fill: #222; }
.town.country text { font-size: 29px; fill: #888; }
.oblast text { font-size: 21px; fill: #9a94bf; }
.oblast .minor { font-size: 17px; fill: #b5b0d0; }
.shield text { font-size: 17px; font-weight: 700; fill: #fff; }
.red rect { fill: #ee5f66; }
.green rect { fill: #1b9063; }
.blue rect { fill: #4c86e6; }

.balloon {
  position: absolute;
  left: 306px;
  top: 69px;
  width: 878px;
  padding: 49px 56px 45px 25px;
  background: #fff;
  box-shadow: 0 8px 24px rgba(0, 0, 0, 0.3);
  font-size: 26px;
  line-height: 39px;
}
.balloon::after {
  content: "";
  position: absolute;
  left: 95px;
  top: 100%;
  border: solid transparent;
  border-width: 20px 20px 0;
  border-top-color: #fff;
}
.balloon p { margin: 0 0 24px; }
.balloon p:last-child { margin: 0; }
.close {
  position: absolute;
  right: 15px;
  top: 29px;
  padding: 0;
  border: 0;
  background: none;
}

.title-block {
  display: grid;
  grid-template-columns: 310px 1fr;
  width: 874px;
  min-height: 260px;
  margin: 15px 0 0 auto;
  border: solid var(--blue);
  border-width: 4px 0 0 4px;
  font: italic 17px/20px Roboto, sans-serif;
}
.changes {
  display: grid;
}
.changes tbody {
  display: grid;
  grid-template-columns: 33px 47px 109px 71px 50px;
  grid-template-rows: repeat(11, 1fr);
}
.changes tr { display: contents; }
.changes td, .changes th {
  padding: 0;
  border: solid;
  border-width: 0 3px 1px 0;
  border-color: #000 var(--blue);
  font-weight: 400;
  line-height: 20px;
  white-space: nowrap;
  overflow: hidden;
}
.changes td.person { font-size: 13px; }
.changes th { font-size: 15px; }
.changes .strong td, .changes .strong th {
  border-bottom: 3px solid var(--blue);
}
.changes .last td { border-bottom: 0; }
.changes .role {
  grid-column: span 2;
  padding-left: 2px;
}
.about {
  display: grid;
  grid-template-columns: 331px 71px 80px 1fr;
  grid-template-rows: 3fr 1fr 3fr 1fr 3fr;
}
.about > div {
  display: flex;
  align-items: center;
  justify-content: center;
  border: solid var(--blue);
  border-width: 0 3px 4px 0;
  text-align: center;
  white-space: nowrap;
}
.about .code { grid-column: 1 / 5; font-size: 36px; font-weight: 300; border-right: 0; }
.about .name { grid-row: 2 / 5; grid-column: 1; font-size: 33px; line-height: 47px; }
.about .head { line-height: 19px; }
.about .scale, .about .scale-cell { border-right: 0; }
.about .scale-cell { font-size: 24px; }
.about .lit-cells { display: grid; grid-template-columns: 22px 24px 1fr; align-items: stretch; }
.lit-cells i + i { border-left: 1px solid #000; }
.about .pages {
  grid-column: 2 / 5;
  display: grid;
  grid-template-columns: 97px 1fr 50px;
  border-right: 0;
  align-items: stretch;
}
.pages span { line-height: 19px; }
.pages span:first-child { border-right: 3px solid var(--blue); padding-right: 36px; }
.about .empty, .about .org { border-bottom: 0; }
.about .org { grid-column: 2 / 5; font-size: 24px; border-right: 0; }
.foot {
  display: flex;
  justify-content: flex-end;
  height: 21px;
  padding-right: 70px;
  gap: 28px;
  font: italic 17px/20px Roboto, sans-serif;
}
.copied { margin-right: 220px; }
</style>
